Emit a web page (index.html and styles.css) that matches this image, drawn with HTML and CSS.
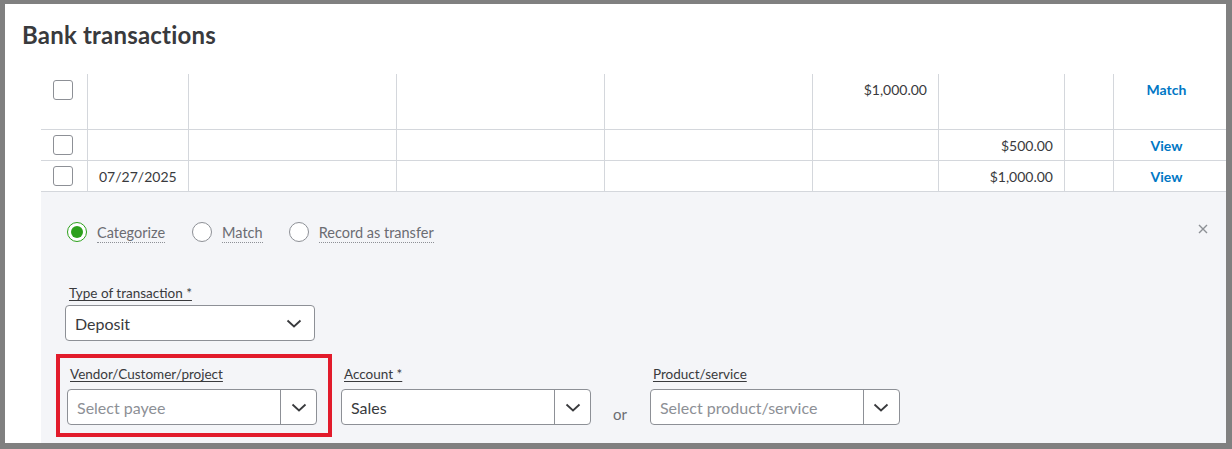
FILE: index.html
```html
<!DOCTYPE html>
<html lang="en">
<head>
  <meta charset="UTF-8" />
  <title>Bank transactions</title>
  <link rel="stylesheet" href="styles.css">
</head>
<body>
  <div class="frame">
    <h1 class="page-title">Bank transactions</h1>

    <div class="txn-list">
      <div class="txn-row tall">
        <div class="cell"><span class="checkbox"></span></div>
        <div class="cell"></div>
        <div class="cell"></div>
        <div class="cell"></div>
        <div class="cell"></div>
        <div class="cell amount">$1,000.00</div>
        <div class="cell amount"></div>
        <div class="cell"></div>
        <div class="cell action"><a href="#">Match</a></div>
      </div>
      <div class="txn-row">
        <div class="cell"><span class="checkbox"></span></div>
        <div class="cell"></div>
        <div class="cell"></div>
        <div class="cell"></div>
        <div class="cell"></div>
        <div class="cell amount"></div>
        <div class="cell amount">$500.00</div>
        <div class="cell"></div>
        <div class="cell action"><a href="#">View</a></div>
      </div>
      <div class="txn-row">
        <div class="cell"><span class="checkbox"></span></div>
        <div class="cell date">07/27/2025</div>
        <div class="cell"></div>
        <div class="cell"></div>
        <div class="cell"></div>
        <div class="cell amount"></div>
        <div class="cell amount">$1,000.00</div>
        <div class="cell"></div>
        <div class="cell action"><a href="#">View</a></div>
      </div>

      <div class="detail-panel">
        <div class="mode-row">
          <label class="radio checked"><span class="dot"></span><span class="radio-text">Categorize</span></label>
          <label class="radio"><span class="dot"></span><span class="radio-text">Match</span></label>
          <label class="radio"><span class="dot"></span><span class="radio-text">Record as transfer</span></label>
          <button class="close" title="Close">
            <svg width="10" height="10" viewBox="0 0 10 10"><path d="M1 1L9 9M9 1L1 9" stroke="#8d9096" stroke-width="1.4" fill="none"/></svg>
          </button>
        </div>

        <div class="field">
          <div class="field-label">Type of transaction *</div>
          <div class="select">
            <span class="select-value">Deposit</span>
            <svg class="chevron" width="16" height="9" viewBox="0 0 16 9"><polyline points="1.5,1.5 8,7.5 14.5,1.5" stroke="#393a3d" stroke-width="1.8" fill="none"/></svg>
          </div>
        </div>

        <div class="field-row">
          <div class="field highlight">
            <div class="field-label">Vendor/Customer/project</div>
            <div class="combo">
              <span class="combo-value placeholder">Select payee</span>
              <span class="combo-btn"><svg width="16" height="9" viewBox="0 0 16 9"><polyline points="1.5,1.5 8,7.5 14.5,1.5" stroke="#393a3d" stroke-width="1.8" fill="none"/></svg></span>
            </div>
          </div>
          <div class="field plain">
            <div class="field-label">Account *</div>
            <div class="combo">
              <span class="combo-value">Sales</span>
              <span class="combo-btn"><svg width="16" height="9" viewBox="0 0 16 9"><polyline points="1.5,1.5 8,7.5 14.5,1.5" stroke="#393a3d" stroke-width="1.8" fill="none"/></svg></span>
            </div>
          </div>
          <span class="or">or</span>
          <div class="field plain">
            <div class="field-label">Product/service</div>
            <div class="combo">
              <span class="combo-value placeholder">Select product/service</span>
              <span class="combo-btn"><svg width="16" height="9" viewBox="0 0 16 9"><polyline points="1.5,1.5 8,7.5 14.5,1.5" stroke="#393a3d" stroke-width="1.8" fill="none"/></svg></span>
            </div>
          </div>
        </div>
      </div>
    </div>
  </div>
</body>
</html>
```

FILE: styles.css
```css
html, body { margin: 0; height: 449px; overflow: hidden; }
body { background: #808080; font-family: Lato, "Open Sans", sans-serif; color: #393a3d; }

.frame {
  margin: 4px 6px 6px 5px; height: 439px; background: #fff; overflow: hidden;
}
.page-title {
  margin: 0; padding: 17px 0 0 17px; height: 70px; box-sizing: border-box;
  font-size: 24px; font-weight: 700; line-height: 28px; letter-spacing: 0.2px; color: #393a3d;
}

/* transaction rows */
.txn-list { margin-left: 36px; }
.txn-row {
  display: grid;
  grid-template-columns: 46px 101px 208px 208px 208px 126px 126px 49px 1fr;
  border-bottom: 1px solid #d4d7dc; height: 31px; box-sizing: border-box;
}
.txn-row.tall { height: 56px; }
.cell {
  border-left: 1px solid #d4d7dc; display: flex; align-items: center;
  font-size: 14px; color: #393a3d; padding: 0 11px;
}
.cell:first-child { border-left: none; padding: 0 0 0 12px; }
.tall .cell { align-items: flex-start; padding-top: 6px; line-height: 20px; }
.cell.amount { justify-content: flex-end; }
.cell.action { justify-content: center; font-weight: 700; padding-right: 18px; }
.cell.action a { color: #0077c5; text-decoration: none; }
.checkbox {
  display: block; width: 20px; height: 20px; box-sizing: border-box;
  border: 1px solid #8d9096; border-radius: 3px; background: #fff;
}

/* categorize panel */
.detail-panel { background: #f4f5f8; height: 260px; padding: 28px 0 0 24px; }
.mode-row { display: flex; align-items: center; height: 24px; padding-left: 2px; }
.radio { display: flex; align-items: center; margin-right: 26px; font-size: 14.5px; color: #6b6c72; }
.radio:first-child { margin-right: 27px; }
.dot {
  width: 20px; height: 20px; box-sizing: border-box; border-radius: 50%;
  border: 1px solid #8d9096; background: #fff; margin-right: 10px; position: relative;
}
.radio.checked .dot { border: 1.5px solid #2ca01c; }
.radio.checked .dot::after {
  content: ""; position: absolute; left: 2.5px; top: 2.5px;
  width: 12px; height: 12px; border-radius: 50%; background: #2ca01c;
}
.radio-text { border-bottom: 1px dotted #8d9096; line-height: 18px; margin-top: 2px; }
.close {
  margin-left: auto; margin-right: 18px; align-self: flex-start; margin-top: 4px;
  background: none; border: none; padding: 0; width: 10px; height: 10px; line-height: 0;
}

.field { display: flex; flex-direction: column; }
.field > .field-label { margin-bottom: 3px; }
.detail-panel > .field { margin-top: 41px; }
.field-label {
  font-size: 13.5px; line-height: 17px; text-decoration: underline;
  text-underline-offset: 2px; padding-left: 3px; color: #393a3d;
}
.detail-panel > .field .field-label { padding-left: 4px; }
.select {
  width: 250px; height: 36px; box-sizing: border-box; background: #fff;
  border: 1px solid #8d9096; border-radius: 4px; display: flex; align-items: center;
  padding: 0 12px 0 9px; font-size: 16px;
}
.select-value { flex: 1; }

.field-row { display: flex; align-items: flex-end; margin-top: 13px; margin-left: -9px; }
.field-row .field > .field-label { margin-bottom: 6px; }
.field.highlight { border: 4px solid #e21b2b; padding: 7px 11px 8px 7px; }
.field.highlight .field-label { margin-top: 1px; }
.field.plain { margin-bottom: 12px; }
.field.plain:nth-child(2) { margin-left: 9px; }
.combo {
  width: 250px; height: 36px; box-sizing: border-box; background: #fff;
  border: 1px solid #8d9096; border-radius: 4px; display: flex; font-size: 16px;
}
.combo-value { flex: 1; display: flex; align-items: center; padding-left: 9px; }
.combo-value.placeholder { color: #8d9096; }
.combo-btn {
  width: 35px; border-left: 1px solid #8d9096; display: flex;
  align-items: center; justify-content: center;
}
.or { font-size: 15px; color: #6b6c72; margin: 0 23px 14px 22px; }
```
